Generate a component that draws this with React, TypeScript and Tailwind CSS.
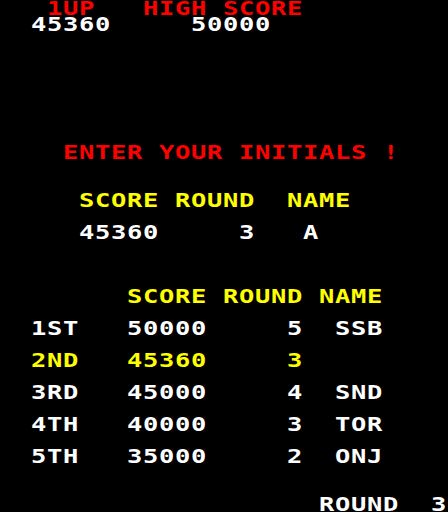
import React from "react";

// Character-cell screen: 28 columns x 32 rows, each cell 16x16px.
type Tone = "red" | "yellow" | "white";

const toneClass: Record<Tone, string> = {
  red: "text-[#ff0000]",
  yellow: "text-[#ffff00]",
  white: "text-[#ffffff]",
};

const lines: Record<number, { text: string; tone: Tone }> = {
  0: { text: "   1UP   HIGH SCORE", tone: "red" },
  1: { text: "  45360     50000", tone: "white" },
  9: { text: "    ENTER YOUR INITIALS !", tone: "red" },
  12: { text: "     SCORE ROUND  NAME", tone: "yellow" },
  14: { text: "     45360     3   A", tone: "white" },
  18: { text: "        SCORE ROUND NAME", tone: "yellow" },
  20: { text: "  1ST   50000     5  SSB", tone: "white" },
  22: { text: "  2ND   45360     3", tone: "yellow" },
  24: { text: "  3RD   45000     4  SND", tone: "white" },
  26: { text: "  4TH   40000     3  TOR", tone: "white" },
  28: { text: "  5TH   35000     2  ONJ", tone: "white" },
  31: { text: "                    ROUND  3", tone: "white" },
};

function Cell({ ch }: { ch: string }) {
  return (
    <span className="flex h-4 w-4 shrink-0 justify-start">
      <span className="flex w-[14px] justify-center">
        {ch === " " ? null : (
          <span className="inline-block scale-x-[1.34] leading-4">{ch}</span>
        )}
      </span>
    </span>
  );
}

function Row({ index }: { index: number }) {
  const line = lines[index];
  if (!line) return <div className="h-4 w-full" />;
  return (
    <div className={`flex h-4 w-full ${toneClass[line.tone]}`}>
      {line.text.split("").map((ch, i) => (
        <Cell key={i} ch={ch} />
      ))}
    </div>
  );
}

export default function App() {
  const rows = Array.from({ length: 32 }, (_, i) => i);
  return (
    <div className="flex h-[512px] w-[448px] flex-col overflow-hidden bg-black font-['DejaVu_Sans_Mono',monospace] text-[19px] font-bold">
      {rows.map((i) => (
        <Row key={i} index={i} />
      ))}
    </div>
  );
}
